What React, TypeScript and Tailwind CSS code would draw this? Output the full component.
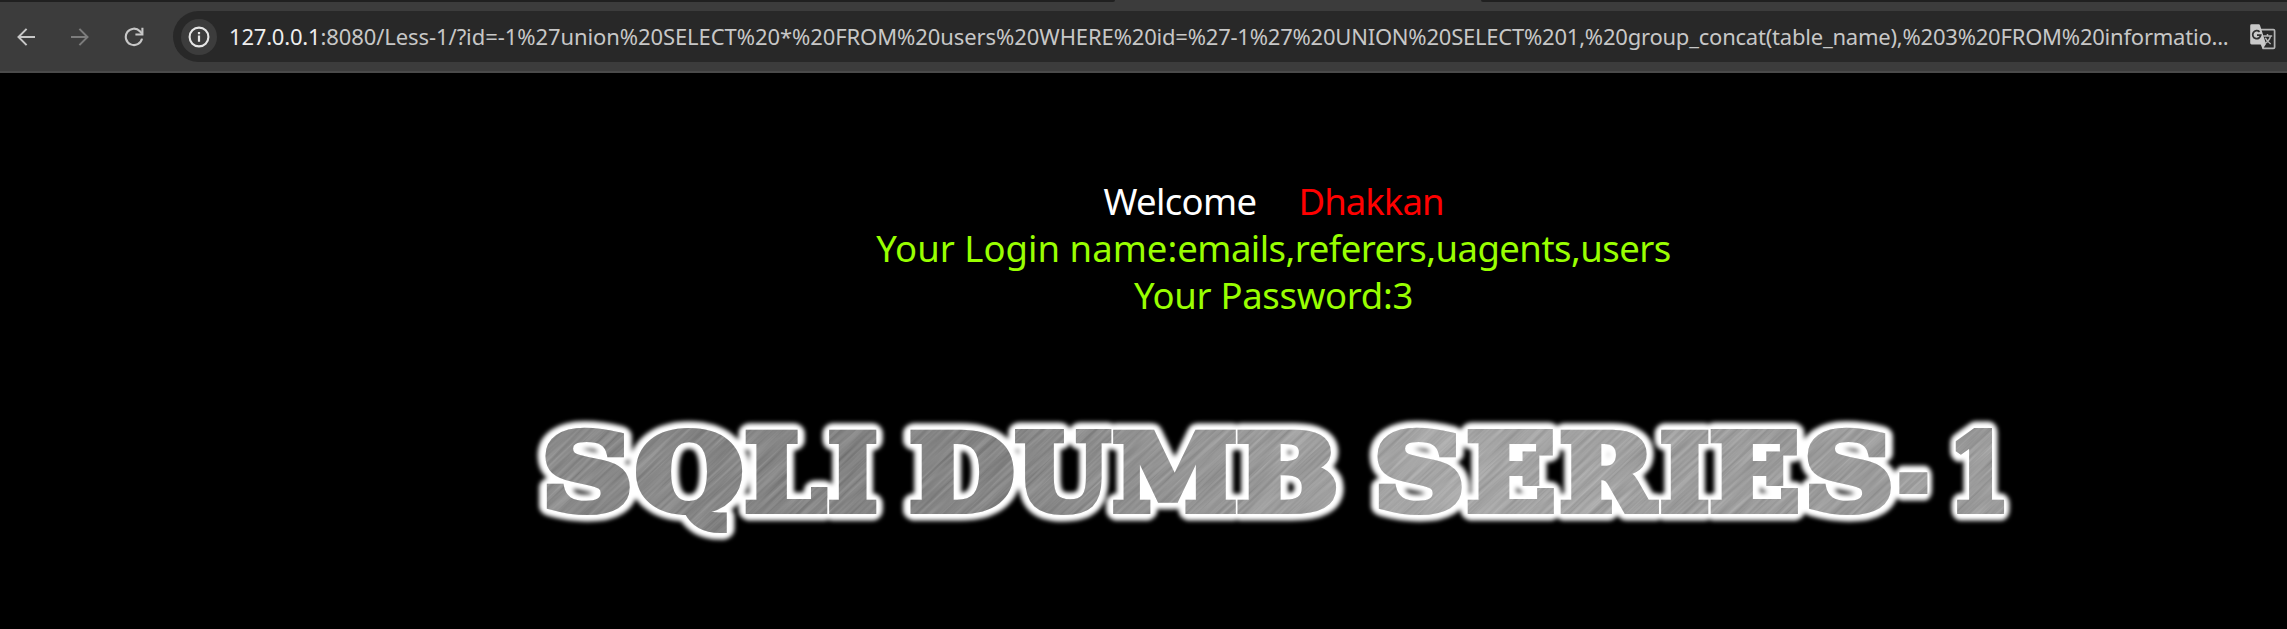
type Glyph = {
  ch: string;
  from: number;
  to: number;
  left: number;
  right: number;
  dy?: number;
};

const FONT_SIZE = 104.5;
const EDGE = 4;

// Horizontal extent of every letter in the banner, with the side bearings of its glyph in em.
const GLYPHS: Glyph[] = [
  { ch: 'S', from: 545, to: 630, left: 0.055, right: 0.67 },
  { ch: 'Q', from: 637, to: 741, left: 0.045, right: 0.825 },
  { ch: 'L', from: 745, to: 828, left: 0.037, right: 0.69 },
  { ch: 'I', from: 828, to: 877, left: 0.037, right: 0.43 },
  { ch: 'D', from: 910, to: 1013, left: 0.037, right: 0.825 },
  { ch: 'U', from: 1015, to: 1112, left: 0.033, right: 0.855 },
  { ch: 'M', from: 1113, to: 1236, left: 0.037, right: 1.06 },
  { ch: 'B', from: 1237, to: 1335, left: 0.037, right: 0.785 },
  { ch: 'S', from: 1377, to: 1462, left: 0.055, right: 0.67 },
  { ch: 'E', from: 1467, to: 1554, left: 0.037, right: 0.717 },
  { ch: 'R', from: 1560, to: 1659, left: 0.037, right: 0.84 },
  { ch: 'I', from: 1660, to: 1709, left: 0.037, right: 0.43 },
  { ch: 'E', from: 1710, to: 1798, left: 0.037, right: 0.717 },
  { ch: 'S', from: 1807, to: 1891, left: 0.055, right: 0.67 },
  { ch: '-', from: 1898, to: 1929, left: 0.05, right: 0.365, dy: 1 },
  { ch: '1', from: 1955, to: 2005, left: 0.12, right: 0.6 },
];

function Letter({
  glyph,
  fill,
  stroke,
  join = 'miter',
}: {
  glyph: Glyph;
  fill: string;
  stroke: number;
  join?: 'miter' | 'round';
}) {
  const width = (glyph.right - glyph.left) * FONT_SIZE;
  const sx = (glyph.to - glyph.from - 2 * EDGE) / width;
  const x = glyph.from + EDGE - glyph.left * FONT_SIZE * sx;
  return (
    <text
      transform={`translate(${x} ${509.5 + (glyph.dy ?? 0)}) scale(${sx} 1)`}
      fontFamily="'DejaVu Serif', serif"
      fontWeight="700"
      fontSize={FONT_SIZE}
      fill={fill}
      stroke={fill}
      strokeWidth={stroke}
      strokeLinejoin={join}
      strokeMiterlimit="1.6"
    >
      {glyph.ch}
    </text>
  );
}

function Banner() {
  return (
    <svg className="block h-[150px] w-[1520px]" viewBox="520 400 1520 150" aria-label="SQLI DUMB SERIES-1">
      <defs>
        <linearGradient id="steel" gradientUnits="userSpaceOnUse" x1="545" y1="0" x2="2003" y2="0">
          <stop offset="0" stopColor="#8b8b8b" />
          <stop offset="0.15" stopColor="#838383" />
          <stop offset="0.32" stopColor="#868686" />
          <stop offset="0.42" stopColor="#959595" />
          <stop offset="0.53" stopColor="#a1a1a1" />
          <stop offset="0.62" stopColor="#acacac" />
          <stop offset="0.85" stopColor="#9e9e9e" />
          <stop offset="1" stopColor="#9e9e9e" />
        </linearGradient>
        <filter id="brush" x="0" y="0" width="1" height="1" colorInterpolationFilters="sRGB">
          <feTurbulence type="fractalNoise" baseFrequency="0.012 0.32" numOctaves="3" seed="4" />
          <feColorMatrix values="1.4 0 0 0 -0.15  1.4 0 0 0 -0.15  1.4 0 0 0 -0.15  0 0 0 0 1" />
        </filter>
        <filter id="halo" filterUnits="userSpaceOnUse" x="520" y="400" width="1520" height="150">
          <feGaussianBlur stdDeviation="1.9" />
        </filter>
        <mask id="letters" maskUnits="userSpaceOnUse" x="520" y="400" width="1520" height="150">
          {GLYPHS.map((g, i) => (
            <g key={i}>
              <Letter glyph={g} fill="#000" stroke={11} />
              <Letter glyph={g} fill="#fff" stroke={8} />
            </g>
          ))}
        </mask>
      </defs>
      <g filter="url(#halo)">
        {GLYPHS.map((g, i) => (
          <Letter key={i} glyph={g} fill="#fff" stroke={21} join="round" />
        ))}
      </g>
      {GLYPHS.map((g, i) => (
        <Letter key={i} glyph={g} fill="#fff" stroke={12} join="round" />
      ))}
      <g mask="url(#letters)">
        <rect x="520" y="400" width="1520" height="150" fill="url(#steel)" />
        <g opacity="0.14">
          <rect
            x="-850"
            y="-650"
            width="1700"
            height="1300"
            transform="translate(1280 475) rotate(-43)"
            filter="url(#brush)"
          />
        </g>
      </g>
    </svg>
  );
}

function ArrowIcon({ className }: { className: string }) {
  return (
    <svg className={className} viewBox="0 0 18 18" fill="none" stroke="currentColor" strokeWidth="2">
      <path d="M18 9H1.6M9.6 0.9 1.5 9l8.1 8.1" />
    </svg>
  );
}

function ReloadIcon() {
  return (
    <svg className="h-5 w-5 text-[#c7c7c7]" viewBox="0 0 20 20" fill="none" stroke="currentColor" strokeWidth="2.1">
      <path d="M18 11.6A8.2 8.2 0 1 1 15.9 4.2L18.3 6.8" />
      <path d="M18.4 0.8V7.5H11.4" />
    </svg>
  );
}

function InfoIcon() {
  return (
    <svg className="h-[22px] w-[22px] text-[#e6e6e6]" viewBox="0 0 22 22" fill="none" stroke="currentColor">
      <circle cx="11" cy="11" r="9.4" strokeWidth="2.1" />
      <path d="M11 9.6v6.2M11 5.9v2.3" strokeWidth="2.2" />
    </svg>
  );
}

function TranslateIcon() {
  return (
    <svg className="h-[26px] w-[26px] shrink-0" viewBox="0 0 26 26" fill="none">
      <path d="M11 5.6h12.4a1.2 1.2 0 0 1 1.2 1.2v16.4a1.2 1.2 0 0 1-1.2 1.2H13.2L11 19" stroke="#b4b4b4" strokeWidth="1.7" />
      <path d="M1.6 0.3h7.2c.6 0 1 .3 1.2.9L16 20l-3.2 5-1.5-4.6H1.6A1.4 1.4 0 0 1 .2 19V1.7A1.4 1.4 0 0 1 1.6.3Z" fill="#c9c9c9" />
      <path d="M9.6 7.9A4 4 0 1 0 10.7 11.2H7" stroke="#303030" strokeWidth="1.8" />
      <path d="M13.2 12h9M17.5 10v2M20.6 12c-.8 3.2-3 5.8-5.8 7.6M15.3 13.8c1 2.4 2.8 4.4 5.4 6.2" stroke="#b4b4b4" strokeWidth="1.5" />
    </svg>
  );
}

export default function App() {
  return (
    <div className="flex h-[629px] w-[2287px] flex-col overflow-hidden bg-black font-['Noto_Sans',sans-serif]">
      <div className="flex h-0.5 shrink-0 bg-[#3c3c3c]">
        <div className="w-[1115px] rounded-br-sm bg-[#202020]" />
        <div className="w-[366px]" />
        <div className="flex-1 rounded-bl-sm bg-[#202020]" />
      </div>
      <header className="flex h-[71px] shrink-0 items-start border-b-2 border-[#4a4a4a] bg-[#3c3c3c] pt-[9px]">
        <nav className="flex h-[51px] w-[173px] shrink-0 items-center pl-[17px]">
          <ArrowIcon className="h-[18px] w-[18px] text-[#c7c7c7]" />
          <ArrowIcon className="ml-9 h-[18px] w-[18px] rotate-180 text-[#7c7c7c]" />
          <span className="ml-[35px]">
            <ReloadIcon />
          </span>
        </nav>
        <div className="flex h-[51px] flex-1 items-center rounded-l-full bg-[#282828] pl-2">
          <span className="flex h-9 w-9 shrink-0 items-center justify-center rounded-full bg-[#3c3c3c]">
            <InfoIcon />
          </span>
          <p className="ml-3 w-[2021px] shrink-0 whitespace-nowrap text-[22px] leading-[51px] tracking-[-0.08px] text-[#c7c7c7]">
            <span className="tracking-[-0.2px] text-[#eeeeee]">127.0.0.1</span>
            :8080/Less-1/?id=-1%27union%20SELECT%20*%20FROM%20users%20WHERE
            <span className="tracking-[-0.22px]">
              %20id=%27-1%27%20UNION%20SELECT%201,%20group_concat(table_name),%203%20FROM%20informatio...
            </span>
          </p>
          <TranslateIcon />
        </div>
      </header>
      <main className="flex flex-1 flex-col items-center pl-[260px] pt-[105px]">
        <div className="text-center text-[36.5px] leading-[47px] tracking-[-0.32px] text-[#99ff00]">
          <p className="flex justify-center gap-[42px]">
            <span className="tracking-[-0.65px] text-white">Welcome</span>
            <span className="tracking-[-0.95px] text-[#ff0000]">Dhakkan</span>
          </p>
          <p>
            <span className="tracking-[0.02px]">Your Login name:</span>
            <span className="tracking-[-0.53px]">emails,referers,uagents,users</span>
          </p>
          <p>Your Password:3</p>
        </div>
        <div className="mt-[81px] flex w-full justify-start pl-[260px]">
          <Banner />
        </div>
      </main>
    </div>
  );
}
